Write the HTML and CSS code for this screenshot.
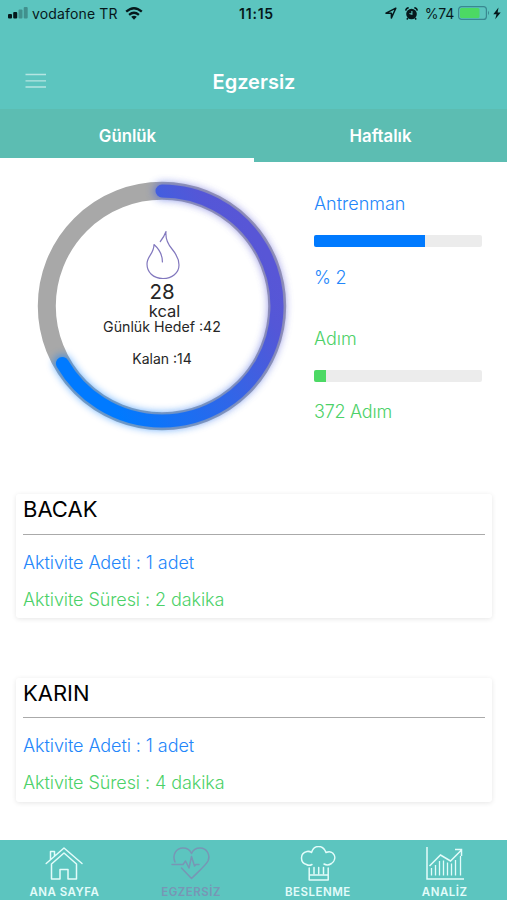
FILE: index.html
```html
<!DOCTYPE html>
<html lang="tr">
<head>
<meta charset="utf-8">
<title>Egzersiz</title>
<link rel="stylesheet" href="styles.css">
</head>
<body>
<div class="app">
  <header class="header">
    <div class="status">
      <div class="status-left">
        <svg class="signal" width="20" height="12" viewBox="0 0 20 12"><rect x="0" y="7" width="4" height="4.500" rx="1"/><rect x="5.200" y="5" width="4" height="6.500" rx="1"/><g opacity=".3"><rect x="10.500" y="2.500" width="4" height="9" rx="1"/><rect x="15.700" y="0" width="4" height="11.500" rx="1"/></g></svg>
        <span class="carrier">vodafone TR</span>
        <svg class="wifi" width="18" height="13" viewBox="0 0 18 13"><g fill="none" stroke="#06181b" stroke-width="2.300"><path d="M1.200 4.700Q9-2.200 16.800 4.700"/><path d="M4.100 7.800Q9 3.700 13.900 7.800"/></g><path d="M6.200 9.700Q9 7.700 11.800 9.700L9 12.700Z"/></svg>
      </div>
      <span class="time">11:15</span>
      <div class="status-right">
        <svg width="12" height="12" viewBox="0 0 12 12"><path d="M1 6.200L10.800 1.200L6.400 11V6.200Z" fill="none" stroke="#06181b" stroke-width="1.500" stroke-linejoin="round"/></svg>
        <svg class="alarm" width="13" height="13" viewBox="0 0 13 13"><circle cx="6.500" cy="7" r="5.300"/><path d="M.7 3.700Q1 1 3.700.8M12.300 3.700Q12 1 9.300.8M3 11L1.800 12.500M10 11L11.200 12.500" fill="none" stroke="#06181b" stroke-width="1.500"/><path d="M6.900 4V7.300L4.500 6.500" fill="none" stroke="#5cc5bf" stroke-width="1.100"/></svg>
        <span class="percent">%74</span>
        <svg class="battery" width="32" height="14" viewBox="0 0 32 14"><rect x=".6" y=".6" width="27.800" height="12.800" rx="3" fill="none" stroke="#398891" stroke-width="1.200"/><rect x="2" y="2" width="19.500" height="10" rx="1.500" fill="#4cd964"/><path d="M30 4.800Q32 7 30 9.200Z" fill="#398891"/></svg>
        <svg width="8" height="13" viewBox="0 0 8 13"><path d="M5.500.5L.3 7.200H3.500L2.200 12.300L7.700 5.500H4.600Z"/></svg>
      </div>
    </div>
    <div class="nav">
      <svg class="menu" width="22" height="16" viewBox="0 0 22 16"><path d="M.5 1.500H21M.5 7.800H21M.5 14H21" stroke="#b5e5e2" stroke-width="1.300"/></svg>
      <h1 class="title">Egzersiz</h1>
    </div>
    <div class="tabs">
      <div class="tab active"><span>Günlük</span></div>
      <div class="tab"><span>Haftalık</span></div>
    </div>
  </header>

  <main class="main">
    <section class="summary">
      <div class="ring">
        <svg class="ring-art" width="276" height="276" viewBox="0 0 276 276">
          <defs>
            <linearGradient id="arc" gradientUnits="userSpaceOnUse" x1="238" y1="80.500" x2="38.400" y2="195.500">
              <stop offset="0" stop-color="#5856d6"/><stop offset=".12" stop-color="#5457d7"/><stop offset=".9" stop-color="#007aff"/>
            </linearGradient>
            <filter id="glow" x="-20%" y="-20%" width="140%" height="140%"><feGaussianBlur stdDeviation="4.500"/></filter>
          </defs>
          <circle cx="138" cy="138" r="115.200" fill="none" stroke="#a8a8a8" stroke-width="18"/>
          <g fill="none" stroke="url(#arc)" stroke-linecap="round">
            <path d="M138 23A115 115 0 1 1 38.400 195.500" stroke-width="16" filter="url(#glow)" opacity=".7"/>
            <path d="M138 23A115 115 0 1 1 38.400 195.500" stroke-width="13"/>
          </g>
        </svg>
        <div class="ring-text">
          <svg class="flame" width="36" height="51" viewBox="0 0 36 51"><path d="M15.300 12.500Q19 8 21 2.500Q20 12 27 20C32 26 34 30 34 36C34 44 27 49.500 18 49.500C8 49.500 2 43 2 35C2 27 9 25 9 15.500C14 20 17.500 25 17.400 33" fill="none" stroke="#8278be" stroke-width="1.200" stroke-linecap="round" stroke-linejoin="round"/></svg>
          <span class="kcal-value">28</span>
          <span class="kcal-unit">kcal</span>
          <span class="goal">Günlük Hedef :42</span>
          <span class="left">Kalan :14</span>
        </div>
      </div>
      <div class="stats">
        <div class="stat blue">
          <span>Antrenman</span>
          <div class="bar"><div class="fill" style="width:66%"></div></div>
          <span class="stat-value">% 2</span>
        </div>
        <div class="stat green">
          <span>Adım</span>
          <div class="bar"><div class="fill" style="width:7.300%"></div></div>
          <span class="stat-value">372 Adım</span>
        </div>
      </div>
    </section>

    <section class="cards">
      <article class="card">
        <h2>BACAK</h2>
        <p class="blue-text">Aktivite Adeti : 1 adet</p>
        <p class="green-text">Aktivite Süresi : 2 dakika</p>
      </article>
      <article class="card second">
        <h2>KARIN</h2>
        <p class="blue-text">Aktivite Adeti : 1 adet</p>
        <p class="green-text">Aktivite Süresi : 4 dakika</p>
      </article>
    </section>
  </main>

  <nav class="bottom">
    <div class="item">
      <svg width="40" height="36" viewBox="0 0 40 36"><g fill="none" stroke="currentColor" stroke-width="1.500" stroke-linejoin="round" stroke-linecap="round"><path d="M2.200 17.500L20 2L38 17.500M6.500 13.500V5.500H10.500V10"/><path d="M7.500 18V33H16V23.500H24V33H32.500V18L20 7Z"/></g></svg>
      <span>ANA SAYFA</span>
    </div>
    <div class="item selected">
      <svg width="40" height="36" viewBox="0 0 40 36"><path d="M1 18.500H12L14.500 15L18 22L20.500 10.500L23.500 20L25 18.500H28M4 16C1 9 5 2 12 2C16 2 19 4 20.500 7.500C22 4 25 2 29 2C36 2 39.500 9 37 15C35 19 28 25 20.500 32.500L10.500 22" fill="none" stroke="currentColor" stroke-width="1.500" stroke-linejoin="round" stroke-linecap="round"/></svg>
      <span>EGZERSİZ</span>
    </div>
    <div class="item">
      <svg width="40" height="36" viewBox="0 0 40 36"><g fill="none" stroke="currentColor" stroke-width="1.500" stroke-linejoin="round" stroke-linecap="round"><path d="M14 18.500Q11 20 8.500 18.500C2 17 1.500 7 9 5.500Q11.500 5 13.500 6.500C16-1.500 25-1.500 28 6.500C36 3 40 13 33.500 17.500Q29.500 20 26 18"/><path d="M11.200 22V34H30.200V22M11.200 29H30.200M16 21.500V27.500M20.700 21.500V27.500M25.500 21.500V27.500"/></g></svg>
      <span>BESLENME</span>
    </div>
    <div class="item">
      <svg width="40" height="36" viewBox="0 0 40 36"><g fill="none" stroke="currentColor" stroke-width="1.500"><path d="M2 1V33H39M4.500 20L15.500 9L25.500 15L36 4.500M30 3.500H36.500V10"/><path stroke-width="1.300" d="M6.500 22V29.500M10.500 19V29.500M14.500 15V29.500M18.500 14.500V29.500M22.500 16.500V29.500M26.500 17.500V29.500M30.500 14V29.500M35.500 10V29.500"/></g></svg>
      <span>ANALİZ</span>
    </div>
  </nav>
</div>
</body>
</html>
```
FILE: styles.css
```css
* { box-sizing: border-box; }
body { margin: 0; font-family: Inter, "Liberation Sans", sans-serif; background: #fff; color: #262626; }
svg { display: block; flex: none; }
span, h1, h2, p { white-space: nowrap; }
.app { width: 507px; height: 900px; display: flex; flex-direction: column; overflow: hidden; }
.header { background: #5cc5bf; flex: none; }
.status { height: 28px; display: grid; grid-template-columns: 1fr auto 1fr; align-items: center; padding: 0 6px 2px 8px; color: #06181b; font-size: 14px; }
.status svg { fill: #06181b; }
.status-left, .status-right { display: flex; align-items: center; }
.status-right { justify-content: flex-end; }
.carrier { margin-left: 4px; letter-spacing: .15px; }
.wifi { margin-left: 7px; }
.time { font-weight: 600; letter-spacing: .75px; margin-left: 4px; }
.alarm { margin-left: 8px; }
.percent { margin: 0 4px 0 7px; letter-spacing: -.2px; }
.battery { margin-right: 3px; }
.nav { height: 81px; padding: 27px 24px 0 25px; display: grid; grid-template-columns: 22px 1fr 22px; align-items: center; }
.menu { margin-bottom: 2px; }
.title { margin: 0; text-align: center; color: #fff; font-size: 20px; font-weight: 600; line-height: 28px; }
.tabs { height: 53px; display: flex; background: #5cbdb2; }
.tab { flex: 1; text-align: center; color: #fff; font-size: 16.800px; font-weight: 600; line-height: 54px; }
.tab.active { border-bottom: 4px solid #fff; padding-left: 1px; }
.main { flex: 1; }
.summary { display: flex; height: 332px; }
.ring { display: grid; margin: 6px 0 0 24px; width: 276px; height: 276px; }
.ring-art, .ring-text { grid-area: 1 / 1; }
.ring-text { display: flex; flex-direction: column; align-items: center; padding-top: 61px; }
.flame { margin-left: 1px; }
.kcal-value { font-size: 20.500px; line-height: 22px; margin-top: 1px; }
.kcal-unit { font-size: 16.500px; line-height: 16px; margin-left: 5px; }
.goal { font-size: 14.200px; line-height: 16px; }
.left { font-size: 14px; line-height: 16px; margin-top: 16px; }
.stats { margin-left: 14px; width: 168px; padding-top: 30px; }
.stat { height: 134.500px; display: flex; flex-direction: column; align-items: flex-start; font-size: 18px; line-height: 24px; font-weight: 300; }
.blue { color: #2386fa; }
.green { color: #4cd168; }
.bar { width: 168px; height: 12px; background: #ececec; border-radius: 2px; overflow: hidden; margin: 19px 0 18.500px; }
.stat-value { letter-spacing: -.25px; }
.fill { height: 100%; }
.blue .fill { background: #007aff; }
.green .fill { background: #4cd964; }
.card { margin: 0 15px 0 16px; height: 124px; padding: 0 7px; border-radius: 3px; background: #fff; box-shadow: 0 1px 5px rgba(0, 0, 0, .1); }
.card.second { margin-top: 59.500px; }
.card h2 { margin: 0 0 16px; height: 40.500px; border-bottom: 1px solid #aaa; font-size: 22px; font-weight: 400; line-height: 31px; color: #000; }
.card p { margin: 0; font-size: 18px; line-height: 24px; font-weight: 300; letter-spacing: -.08px; }
.card .blue-text { color: #2386fa; }
.card .green-text { color: #4cd168; margin-top: 13px; }
.bottom { height: 60px; flex: none; display: flex; background: #5cc5bf; color: #e3fcfa; }
.item { flex: 1; display: flex; flex-direction: column; align-items: center; padding: 6px 0 0 2px; }
.item span { font-size: 11.500px; font-weight: 600; line-height: 16px; margin-top: 2px; letter-spacing: .5px; }
.selected { color: #7896b5; }
```
